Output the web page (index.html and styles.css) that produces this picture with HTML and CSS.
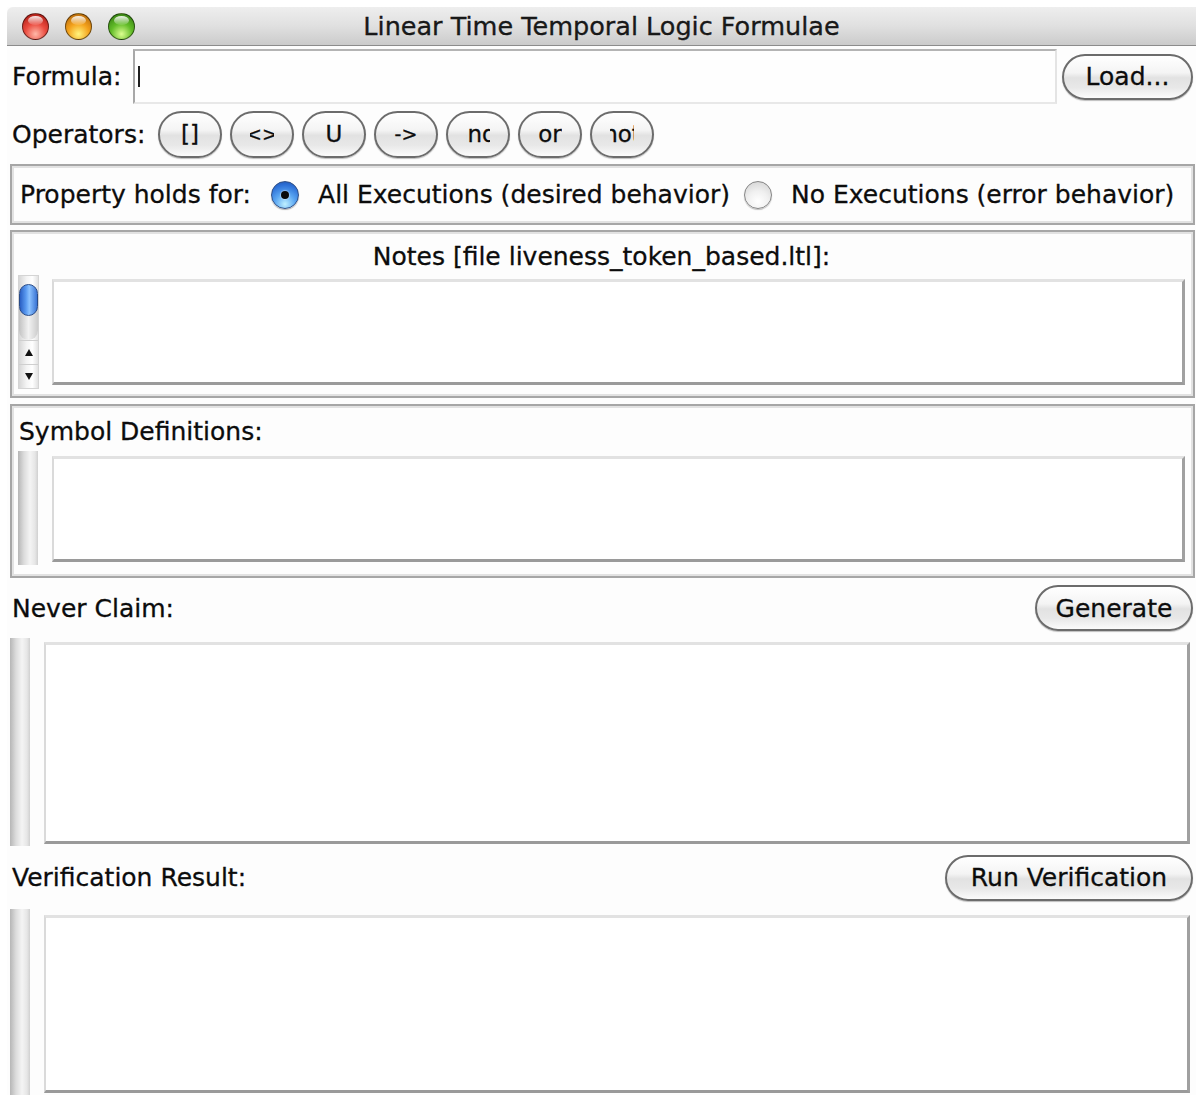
FILE: index.html
```html
<!DOCTYPE html>
<html lang="en">
<head>
<meta charset="utf-8">
<title>Linear Time Temporal Logic Formulae</title>
<link rel="stylesheet" href="styles.css">
</head>
<body>
<div class="window">
  <header class="titlebar">
    <div class="lights">
      <span class="light red"></span>
      <span class="light yellow"></span>
      <span class="light green"></span>
    </div>
    <div class="title">Linear Time Temporal Logic Formulae</div>
    <div></div>
  </header>

  <div class="row formula-row">
    <span class="formula-label">Formula:</span>
    <div class="field"><span class="caret"></span></div>
    <button class="pill load">Load...</button>
  </div>

  <div class="row ops-row">
    <span class="ops-label">Operators:</span>
    <div class="ops">
      <button class="pill op"><span class="op-clip"><span>[]</span></span></button>
      <button class="pill op"><span class="op-clip"><span class="small">&lt;&gt;</span></span></button>
      <button class="pill op"><span class="op-clip"><span>U</span></span></button>
      <button class="pill op"><span class="op-clip"><span class="small">-&gt;</span></span></button>
      <button class="pill op"><span class="op-clip"><span class="nudge-left">and</span></span></button>
      <button class="pill op"><span class="op-clip"><span>or</span></span></button>
      <button class="pill op"><span class="op-clip"><span>not</span></span></button>
    </div>
  </div>

  <div class="panel prop-panel">
    <span class="prop-label">Property holds for:</span>
    <span class="radio checked"></span>
    <span class="radio-text">All Executions (desired behavior)</span>
    <span class="radio unchecked"></span>
    <span class="radio-text">No Executions (error behavior)</span>
  </div>

  <div class="panel notes-panel">
    <div class="panel-title centered">Notes [file liveness_token_based.ltl]:</div>
    <div class="panel-body">
      <div class="scrollbar">
        <div class="track">
          <div class="thumb"></div>
          <div class="thumb-cap"></div>
        </div>
        <div class="arrow up"></div>
        <div class="arrow down"></div>
      </div>
      <div class="textarea notes-text"></div>
    </div>
  </div>

  <div class="panel symbols-panel">
    <div class="panel-title">Symbol Definitions:</div>
    <div class="panel-body">
      <div class="bar"></div>
      <div class="textarea symbols-text"></div>
    </div>
  </div>

  <div class="row section-row claim-row">
    <span class="section-label">Never Claim:</span>
    <button class="pill generate">Generate</button>
  </div>
  <div class="output claim-output">
    <div class="bar"></div>
    <div class="textarea claim-text"></div>
  </div>

  <div class="row section-row verify-row">
    <span class="section-label">Verification Result:</span>
    <button class="pill run">Run Verification</button>
  </div>
  <div class="output verify-output">
    <div class="bar"></div>
    <div class="textarea verify-text"></div>
  </div>
</div>
</body>
</html>
```

FILE: styles.css
```css
* {
  box-sizing: border-box;
}

html, body {
  margin: 0;
  padding: 0;
  background: #ffffff;
  overflow: hidden;
}

body {
  font-family: "DejaVu Sans", "Liberation Sans", sans-serif;
  font-size: 25px;
  color: #0c0c0c;
  -webkit-text-stroke: 0.3px #0c0c0c;
  height: 1095px;
}

.window {
  margin: 7px 0 0 7px;
  width: 1189px;
  background: #fdfdfd;
}

/* window title bar */
.titlebar {
  height: 39px;
  display: grid;
  grid-template-columns: 1fr auto 1fr;
  align-items: center;
  background: linear-gradient(to bottom, #eeeeee 0%, #e0e0e0 50%, #cbcbcb 100%);
  border-bottom: 1px solid #8c8c8c;
  border-top-left-radius: 6px;
}

.lights {
  display: flex;
  gap: 16px;
  padding-left: 15px;
}

.light {
  width: 27px;
  height: 27px;
  border-radius: 50%;
  border: 1px solid rgba(0, 0, 0, 0.5);
  position: relative;
}

/* glossy highlight on each window button */
.light::after {
  content: "";
  position: absolute;
  left: 5px;
  top: 2px;
  width: 15px;
  height: 9px;
  border-radius: 50%;
  background: linear-gradient(to bottom, rgba(255, 255, 255, 0.9), rgba(255, 255, 255, 0.1));
}

.light.red {
  background: radial-gradient(circle at 50% 80%, #ffb8a8 0%, #ea4a3e 45%, #9e120c 100%);
}

.light.yellow {
  background: radial-gradient(circle at 50% 80%, #fff47e 0%, #f4a21c 45%, #a85c08 100%);
}

.light.green {
  background: radial-gradient(circle at 50% 80%, #dcff90 0%, #62bc28 45%, #2b720e 100%);
}

.title {
  font-size: 25.5px;
  color: #1a1a1a;
}

/* generic rows */
.row {
  display: flex;
  align-items: center;
  padding: 0 3px 0 5px;
}

.formula-row {
  height: 61px;
}

.formula-label {
  width: 121px;
  flex: none;
}

.field {
  flex: 1;
  height: 55px;
  background: #fefefe;
  border-top: 2px solid #b4b4b4;
  border-left: 2px solid #a8a8a8;
  border-right: 2px solid #e4e4e4;
  border-bottom: 2px solid #e8e8e8;
  display: flex;
  align-items: center;
  padding-left: 3px;
}

.caret {
  width: 2px;
  height: 21px;
  background: #202020;
}

/* aqua style pill buttons */
.pill {
  font-family: inherit;
  font-size: 25px;
  color: #0c0c0c;
  height: 46px;
  padding: 0;
  border: 2px solid #6c6c6c;
  border-radius: 24px;
  background: linear-gradient(to bottom, #ffffff 0%, #f4f4f4 40%, #e2e2e2 52%, #e8e8e8 75%, #fbfbfb 100%);
  box-shadow: 0 1px 1px rgba(0, 0, 0, 0.25);
  display: flex;
  align-items: center;
  justify-content: center;
}

.load {
  width: 131px;
  margin-left: 5px;
  flex: none;
}

.ops-row {
  height: 54px;
}

.ops-label {
  width: 146px;
  flex: none;
}

.ops {
  display: flex;
  gap: 8px;
}

.op {
  width: 64px;
  height: 47px;
}

.op-clip {
  width: 24px;
  overflow: hidden;
  display: flex;
  justify-content: center;
  white-space: nowrap;
  font-size: 23px;
}

.op-clip .small {
  font-size: 19px;
}

.op-clip .nudge-left {
  padding-right: 6px;
}

/* etched panels */
.panel {
  margin-left: 3px;
  margin-right: 1px;
  border: 2px solid #a6a6a6;
  box-shadow: inset 0 0 0 2px #e2e2e2;
  background: #fdfdfd;
}

.prop-panel {
  margin-top: 3px;
  height: 61px;
  display: flex;
  align-items: center;
  padding-left: 8px;
}

.radio {
  width: 28px;
  height: 28px;
  border-radius: 50%;
  flex: none;
  position: relative;
}

.radio.checked {
  margin-left: 20px;
  border: 1px solid #2f4f86;
  background: radial-gradient(circle at 50% 85%, #bff0ff 0%, #5aa6f2 40%, #2c6fd6 75%, #1d4fa8 100%);
  box-shadow: 0 1px 1px rgba(0, 0, 0, 0.3);
}

.radio.checked::after {
  content: "";
  position: absolute;
  left: 9px;
  top: 9px;
  width: 8px;
  height: 8px;
  border-radius: 50%;
  background: #0a0a0a;
  box-shadow: 0 0 1px 1px rgba(255, 255, 255, 0.35);
}

.radio.unchecked {
  margin-left: 14px;
  border: 1px solid #858585;
  background: radial-gradient(circle at 50% 75%, #ffffff 0%, #f0f0f0 45%, #cfcfcf 100%);
  box-shadow: 0 1px 1px rgba(0, 0, 0, 0.25);
}

.radio-text {
  margin-left: 19px;
}

.notes-panel {
  margin-top: 5px;
  height: 168px;
  padding: 0 8px 3px 6px;
}

.panel-title {
  height: 43px;
  display: flex;
  align-items: center;
  padding-top: 6px;
}

.panel-title.centered {
  justify-content: center;
}

.panel-body {
  display: flex;
  align-items: flex-start;
}

.scrollbar {
  width: 21px;
  height: 114px;
  display: flex;
  flex-direction: column;
  border: 1px solid #d4d4d4;
  background: linear-gradient(to right, #d6d6d6, #f4f4f4 40%, #ffffff 70%, #e2e2e2);
}

.track {
  flex: 1;
  position: relative;
}

.thumb {
  position: absolute;
  left: 0;
  top: 8px;
  width: 19px;
  height: 32px;
  border-radius: 10px;
  border: 1px solid #2a4c88;
  background: linear-gradient(to right, #2a5fc4 0%, #5a9af0 35%, #8cc2ff 55%, #3a74d4 100%);
  z-index: 1;
}

.thumb-cap {
  position: absolute;
  left: 0;
  top: 26px;
  width: 19px;
  height: 38px;
  border-radius: 0 0 10px 10px;
  background: linear-gradient(to right, #c2c2c2, #f2f2f2 50%, #cccccc);
}

.arrow {
  height: 24px;
  display: flex;
  align-items: center;
  justify-content: center;
  border-top: 1px solid #cfcfcf;
}

.arrow::before {
  content: "";
  width: 0;
  height: 0;
  border-left: 4px solid transparent;
  border-right: 4px solid transparent;
}

.arrow.up::before {
  border-bottom: 7px solid #111;
}

.arrow.down::before {
  border-top: 7px solid #111;
}

.textarea {
  background: #ffffff;
  border-top: 3px solid #e2e2e2;
  border-left: 2px solid #dadada;
  border-right: 3px solid #a0a0a0;
  border-bottom: 3px solid #9a9a9a;
}

.notes-text {
  flex: 1;
  margin-left: 13px;
  margin-top: 4px;
  height: 106px;
}

.symbols-panel {
  margin-top: 6px;
  height: 174px;
  padding: 0 8px 7px 6px;
}

.symbols-panel .panel-title {
  height: 45px;
  padding-left: 1px;
}

/* empty scrollbar gutter */
.bar {
  width: 20px;
  flex: none;
  background: linear-gradient(to right, #b6b6b6 0%, #dcdcdc 30%, #f4f4f4 60%, #e6e6e6 85%, #d0d0d0 100%);
}

.symbols-panel .bar {
  height: 114px;
}

.symbols-text {
  flex: 1;
  margin-left: 14px;
  margin-top: 5px;
  height: 106px;
}

.section-row {
  justify-content: space-between;
}

.claim-row {
  height: 60px;
}

.generate {
  width: 158px;
}

.output {
  display: flex;
  align-items: flex-start;
  margin-left: 3px;
  margin-right: 6px;
}

.claim-output .bar {
  height: 208px;
}

.claim-text {
  flex: 1;
  margin-left: 14px;
  margin-top: 4px;
  height: 202px;
}

.verify-row {
  height: 63px;
}

.run {
  width: 248px;
}

.verify-output .bar {
  height: 190px;
}

.verify-text {
  flex: 1;
  margin-left: 14px;
  margin-top: 6px;
  height: 178px;
}
```
